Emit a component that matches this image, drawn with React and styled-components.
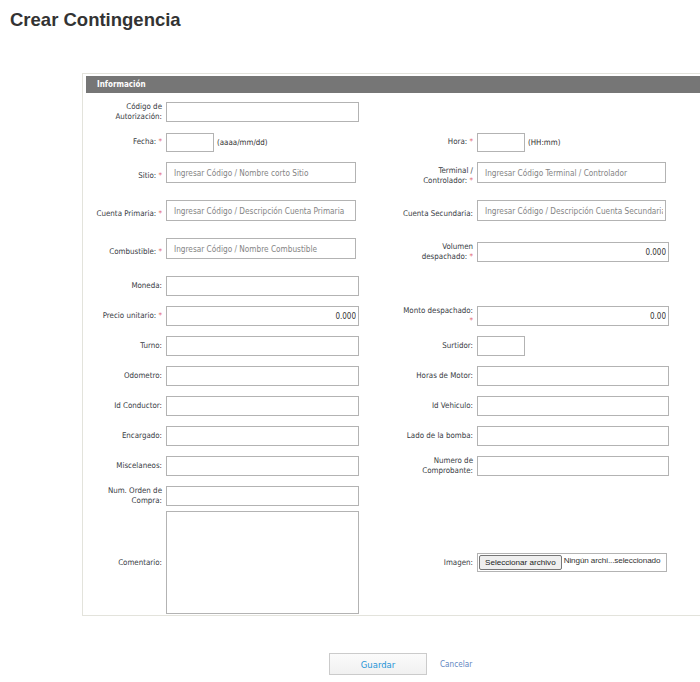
import React from "react";
import styled, { createGlobalStyle } from "styled-components";

const Global = createGlobalStyle`
  html, body { margin: 0; padding: 0; background: #fff; overflow: hidden; }
  body { font-family: "DejaVu Sans Condensed", "DejaVu Sans", sans-serif; color: #3c3c3c; }
  * { box-sizing: border-box; }
`;

const Page = styled.div`
  width: 700px;
  height: 682px;
  overflow: hidden;
`;

const Title = styled.h1`
  margin: 0;
  padding: 9px 0 0 10px;
  font-family: "Liberation Sans", Arial, sans-serif;
  font-weight: bold;
  font-size: 18.5px;
  line-height: 22px;
  color: #333;
`;

const Panel = styled.section`
  margin: 42px 0 0 82px;
  width: 660px;
  border: 1px solid #e3e3dc;
`;

const PanelHeader = styled.div`
  margin: 2px 0 0 3px;
  height: 17px;
  padding-left: 11px;
  background: #767676;
  color: #fff;
  font-weight: bold;
  font-size: 8px;
  line-height: 17px;
`;

const Form = styled.div`
  padding-top: 4px;
`;

const Row = styled.div`
  display: grid;
  grid-template-columns: 79px 229px 74px 1fr;
  column-gap: 4px;
  align-items: center;
  padding: ${(p) => (p.$last ? "0 0 1px" : "5px 0")};
`;

const Label = styled.div`
  text-align: right;
  white-space: nowrap;
  font-size: 7.9px;
  line-height: 10px;
  color: #383c44;
`;

const Req = styled.span`
  color: #e26a70;
`;

const TextInput = styled.input`
  display: block;
  width: ${(p) => p.$w || 193}px;
  height: ${(p) => p.$h || 20}px;
  margin: 0;
  border: 1px solid #b3b3b3;
  border-radius: 0;
  background: #fff;
  padding: 0 2px 0 3px;
  font-family: inherit;
  font-size: 8px;
  color: #333;
  text-align: ${(p) => (p.$right ? "right" : "left")};
  outline: none;
`;

const AutoWrap = styled.div`
  padding-bottom: 7px;
`;

const AutoInput = styled(TextInput)`
  height: 21px;
  padding-left: 7px;
  font-size: 8.2px;
  &::placeholder { color: #848484; opacity: 1; }
`;

const Hinted = styled.div`
  display: flex;
  align-items: center;
  gap: 3px;
  height: 20px;
`;

const Hint = styled.span`
  font-size: 7.9px;
  color: #333;
`;

const TextArea = styled.textarea`
  display: block;
  width: 193px;
  height: 103px;
  margin: 0;
  border: 1px solid #b3b3b3;
  resize: none;
  outline: none;
  font-family: inherit;
`;

const FileBox = styled.div`
  display: flex;
  align-items: flex-start;
  gap: 2px;
  width: 190px;
  height: 19px;
  padding: 1px;
  border: 1px solid #b3b3b3;
  overflow: hidden;
  font-family: "Liberation Sans", Arial, sans-serif;
  font-size: 8.1px;
  color: #333;
`;

const FileButton = styled.span`
  flex: none;
  height: 15px;
  padding: 0 5px;
  border: 1px solid #767676;
  border-radius: 2px;
  background: #efefef;
  line-height: 13px;
  color: #222;
  white-space: nowrap;
`;

const FileName = styled.span`
  white-space: nowrap;
  line-height: 12px;
  letter-spacing: -0.1px;
`;

const Actions = styled.div`
  display: flex;
  align-items: center;
  gap: 13px;
  margin-top: 37px;
  padding-left: 329px;
`;

const SaveButton = styled.button`
  width: 98px;
  height: 22px;
  border: 1px solid #cbcbcb;
  background: linear-gradient(#fbfbfb, #f1f1f1);
  color: #1e94d6;
  font-family: inherit;
  font-size: 9.4px;
  font-weight: 500;
  padding: 0;
  cursor: pointer;
`;

const CancelLink = styled.a`
  font-size: 8.1px;
  color: #5f86c2;
  text-decoration: none;
`;

const L = ({ children, req, reqBreak }) => (
  <Label>
    {children}
    {req && (reqBreak ? <><br /><Req>*</Req></> : <> <Req>*</Req></>)}
  </Label>
);

const Empty = () => <div />;

export default function App() {
  return (
    <Page>
      <Global />
      <Title>Crear Contingencia</Title>
      <Panel>
        <PanelHeader>Información</PanelHeader>
        <Form>
          <Row>
            <L>Código de<br />Autorización:</L>
            <TextInput />
            <Empty />
            <Empty />
          </Row>
          <Row>
            <L req>Fecha:</L>
            <Hinted><TextInput $w={48} $h={19} /><Hint>(aaaa/mm/dd)</Hint></Hinted>
            <L req>Hora:</L>
            <Hinted><TextInput $w={48} $h={19} /><Hint>(HH:mm)</Hint></Hinted>
          </Row>
          <Row>
            <L req>Sitio:</L>
            <AutoWrap><AutoInput $w={190} placeholder="Ingresar Código / Nombre corto Sitio" /></AutoWrap>
            <L req>Terminal /<br />Controlador:</L>
            <AutoWrap><AutoInput $w={189} placeholder="Ingresar Código Terminal / Controlador" /></AutoWrap>
          </Row>
          <Row>
            <L req>Cuenta Primaria:</L>
            <AutoWrap><AutoInput $w={190} placeholder="Ingresar Código / Descripción Cuenta Primaria" /></AutoWrap>
            <L>Cuenta Secundaria:</L>
            <AutoWrap><AutoInput $w={189} placeholder="Ingresar Código / Descripción Cuenta Secundaria" /></AutoWrap>
          </Row>
          <Row>
            <L req>Combustible:</L>
            <AutoWrap><AutoInput $w={190} placeholder="Ingresar Código / Nombre Combustible" /></AutoWrap>
            <L req>Volumen<br />despachado:</L>
            <TextInput $w={192} $right defaultValue="0.000" />
          </Row>
          <Row>
            <L>Moneda:</L>
            <TextInput />
            <Empty />
            <Empty />
          </Row>
          <Row>
            <L req>Precio unitario:</L>
            <TextInput $right defaultValue="0.000" />
            <L req reqBreak>Monto despachado:</L>
            <TextInput $w={192} $right defaultValue="0.00" />
          </Row>
          <Row>
            <L>Turno:</L>
            <TextInput />
            <L>Surtidor:</L>
            <TextInput $w={48} />
          </Row>
          <Row>
            <L>Odometro:</L>
            <TextInput />
            <L>Horas de Motor:</L>
            <TextInput $w={192} />
          </Row>
          <Row>
            <L>Id Conductor:</L>
            <TextInput />
            <L>Id Vehiculo:</L>
            <TextInput $w={192} />
          </Row>
          <Row>
            <L>Encargado:</L>
            <TextInput />
            <L>Lado de la bomba:</L>
            <TextInput $w={192} />
          </Row>
          <Row>
            <L>Miscelaneos:</L>
            <TextInput />
            <L>Numero de<br />Comprobante:</L>
            <TextInput $w={192} />
          </Row>
          <Row>
            <L>Num. Orden de<br />Compra:</L>
            <TextInput />
            <Empty />
            <Empty />
          </Row>
          <Row $last>
            <L>Comentario:</L>
            <TextArea />
            <L>Imagen:</L>
            <FileBox>
              <FileButton>Seleccionar archivo</FileButton>
              <FileName>Ningún archi...seleccionado</FileName>
            </FileBox>
          </Row>
        </Form>
      </Panel>
      <Actions>
        <SaveButton type="button">Guardar</SaveButton>
        <CancelLink href="#">Cancelar</CancelLink>
      </Actions>
    </Page>
  );
}
